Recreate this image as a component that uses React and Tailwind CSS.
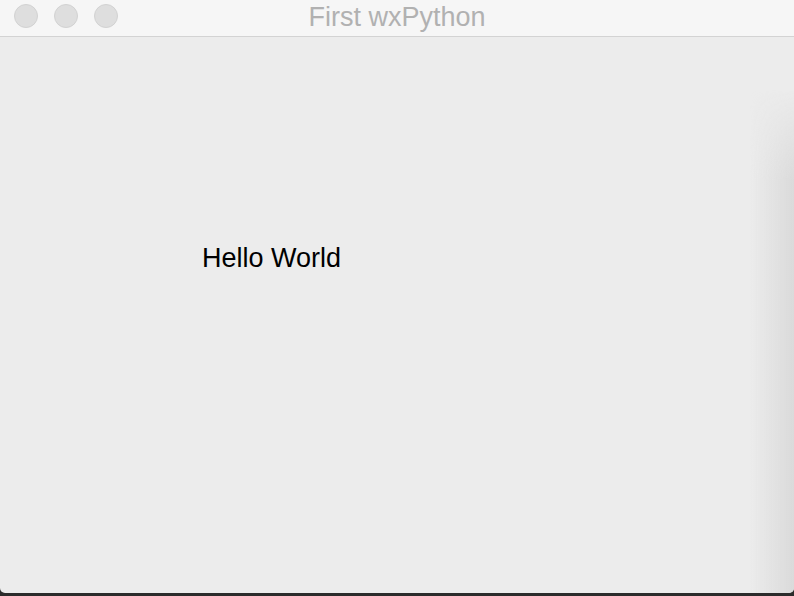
export default function App() {
  return (
    <div className="w-[794px] h-[596px] bg-[#2b2b2b] overflow-hidden" style={{ fontFamily: '"Liberation Sans", Arial, sans-serif' }}>
      <div className="relative h-[593px] flex flex-col bg-[#ececec] rounded-b-[5px] overflow-hidden">
        <div className="relative h-[37px] shrink-0 bg-[#f6f6f6] border-b border-[#d3d3d3] flex items-start pt-[4px] pl-[14px] gap-[16px]">
          <div className="w-[24px] h-[24px] rounded-full bg-[#dedede] border border-[#d2d2d2]" />
          <div className="w-[24px] h-[24px] rounded-full bg-[#dedede] border border-[#d2d2d2]" />
          <div className="w-[24px] h-[24px] rounded-full bg-[#dedede] border border-[#d2d2d2]" />
          <div className="absolute left-0 right-0 top-[4px] text-center text-[27px] leading-none text-[#b1b1b1]">
            First wxPython
          </div>
        </div>
        <div className="flex-1 pt-[208px] pl-[202px]">
          <div className="text-[27px] leading-none text-black">Hello World</div>
        </div>
        <div className="absolute right-0 top-[90px] bottom-0 w-[44px] bg-gradient-to-r from-[#ececec00] to-[#dadada] [mask-image:linear-gradient(to_bottom,transparent,black_90px)]" />
      </div>
    </div>
  );
}
